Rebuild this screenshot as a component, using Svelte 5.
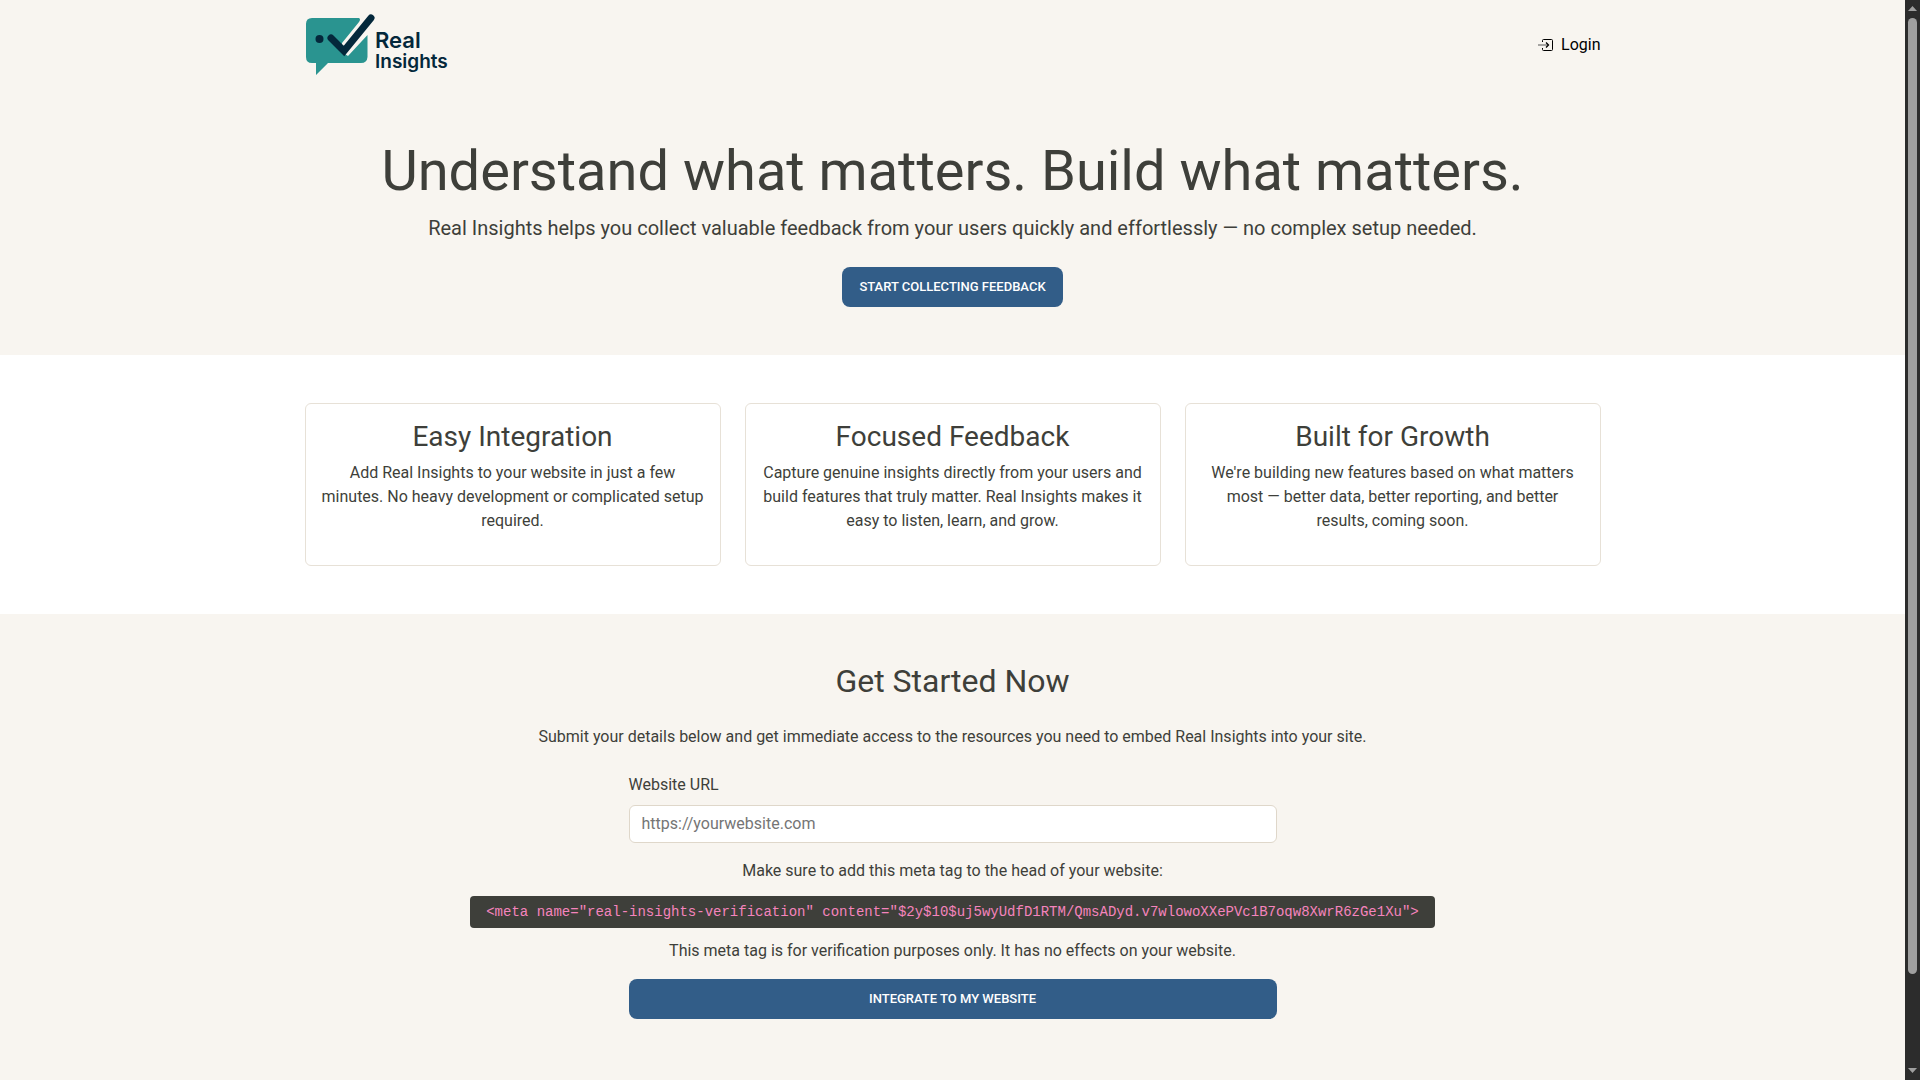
<!--
  Landing page: header, hero, feature cards and the integration form.
-->
<script lang="ts">
  interface Feature {
    title: string;
    text: string;
  }

  const features: Feature[] = [
    {
      title: 'Easy Integration',
      text: 'Add Real Insights to your website in just a few minutes. No heavy development or complicated setup required.',
    },
    {
      title: 'Focused Feedback',
      text: 'Capture genuine insights directly from your users and build features that truly matter. Real Insights makes it easy to listen, learn, and grow.',
    },
    {
      title: 'Built for Growth',
      text: "We're building new features based on what matters most — better data, better reporting, and better results, coming soon.",
    },
  ];

  const token = '$2y$10$uj5wyUdfD1RTM/QmsADyd.v7wlowoXXePVc1B7oqw8XwrR6zGe1Xu';
  const metaTag = `<meta name="real-insights-verification" content="${token}">`;

  let url = $state('');

  function submit(event: SubmitEvent): void {
    event.preventDefault();
  }
</script>

<div class="shell">
  <div class="page">
    <header class="header container">
      <a class="logo" href="/" aria-label="Real Insights">
        <svg width="150" height="66" viewBox="0 0 150 66" aria-hidden="true">
          <path
            d="M7 6H54Q56 7 54 10L37 31V40L43 44L62.500 23V45Q62 51 56 51H23L11 63V51H7Q1 51 1 45V12Q1 6 7 6Z"
            fill="#2a9490"
          />
          <circle cx="14.500" cy="27" r="4" fill="#04283b" />
          <path
            d="M26 26L39 39L66 6"
            fill="none"
            stroke="#04283b"
            stroke-width="7"
            stroke-linecap="round"
            stroke-linejoin="miter"
          />
          <text class="logo__text" x="70" y="36" font-size="22">Real</text>
          <text class="logo__text" x="70" y="56" font-size="19">Insights</text>
        </svg>
      </a>
      <a class="login" href="/login">
        <svg width="16" height="16" viewBox="0 0 16 16" fill="none" aria-hidden="true">
          <path d="M4.500 5V3.500Q4.500 2.500 5.500 2.500H13.500Q14.500 2.500 14.500 3.500V12.500Q14.500 13.500 13.500 13.500H5.500Q4.500 13.500 4.500 12.500V11" stroke="currentColor" />
          <path d="M0 8H10" stroke="#555" />
          <path d="M8 5.500L10.500 8L8 10.500" stroke="currentColor" stroke-width="1.300" />
        </svg>
        <span>Login</span>
      </a>
    </header>

    <section class="hero container">
      <h1>Understand what matters. Build what matters.</h1>
      <p class="lead">
        Real Insights helps you collect valuable feedback from your users quickly and effortlessly — no complex setup needed.
      </p>
      <button type="button" class="btn">Start Collecting Feedback</button>
    </section>

    <section class="features">
      <div class="features__grid container">
        {#each features as feature}
          <article class="card">
            <h3>{feature.title}</h3>
            <p>{feature.text}</p>
          </article>
        {/each}
      </div>
    </section>

    <section class="start container">
      <h2>Get Started Now</h2>
      <p class="start__intro">
        Submit your details below and get immediate access to the resources you need to embed Real Insights into your site.
      </p>
      <form class="form" onsubmit={submit}>
        <div class="form__field">
          <label for="website-url">Website URL</label>
          <input id="website-url" type="url" placeholder="https://yourwebsite.com" bind:value={url} />
        </div>
        <p>Make sure to add this meta tag to the head of your website:</p>
        <p><code>{metaTag}</code></p>
        <p>This meta tag is for verification purposes only. It has no effects on your website.</p>
        <button type="submit" class="btn form__submit">Integrate to my website</button>
      </form>
    </section>
  </div>

  <div class="scrollbar" aria-hidden="true">
    <svg width="9" height="5" viewBox="0 0 9 5"><path d="M0 5L4.500 0L9 5Z" /></svg>
    <div class="scrollbar__track">
      <div class="scrollbar__thumb"></div>
    </div>
    <svg width="9" height="5" viewBox="0 0 9 5"><path d="M0 0L4.500 5L9 0Z" /></svg>
  </div>
</div>

<style>
  :global(body) {
    background: #f8f5f0;
    color: #3e3f3a;
    font-family: Roboto, sans-serif;
    font-size: 16px;
    line-height: 1.5;
  }

  .shell {
    display: flex;
    height: 100vh;
    overflow: hidden;
  }

  .page {
    flex: 1;
    min-width: 0;
  }

  .container {
    box-sizing: border-box;
    width: 100%;
    max-width: 1320px;
    margin: 0 auto;
    padding-right: 12px;
    padding-left: 12px;
  }

  h1,
  h2,
  h3,
  p {
    margin: 0;
    font-weight: 400;
  }

  .header {
    display: flex;
    align-items: center;
    justify-content: space-between;
    padding-top: 12px;
    padding-bottom: 12px;
  }

  .logo {
    display: flex;
  }

  .logo__text {
    fill: #04283b;
    font-family: Inter, sans-serif;
    font-weight: 600;
  }

  .login {
    display: flex;
    align-items: center;
    gap: 7px;
    color: #000;
    text-decoration: none;
  }

  .hero {
    padding-top: 48px;
    padding-bottom: 48px;
    text-align: center;
  }

  h1 {
    margin-bottom: 8px;
    font-size: 56px;
    line-height: 67px;
  }

  .lead {
    margin-bottom: 24px;
    font-size: 20px;
  }

  .btn {
    display: inline-block;
    padding: 9px 17px;
    border: 0;
    border-radius: 8px;
    background: #325d88;
    color: #fff;
    font-family: inherit;
    font-size: 13px;
    font-weight: 500;
    line-height: 22px;
    text-transform: uppercase;
    vertical-align: top;
    cursor: pointer;
  }

  .features {
    padding: 48px 0;
    background: #fff;
  }

  .features__grid {
    display: grid;
    grid-template-columns: repeat(3, 1fr);
    gap: 24px;
  }

  .card {
    padding: 16px 16px 32px;
    border: 1px solid #e7e1d7;
    border-radius: 6px;
    text-align: center;
  }

  h3 {
    margin-bottom: 8px;
    font-size: 28px;
    line-height: 33px;
  }

  .start {
    padding-top: 48px;
    padding-bottom: 48px;
    text-align: center;
  }

  h2 {
    margin-bottom: 24px;
    font-size: 32px;
    line-height: 39px;
  }

  .start__intro {
    margin-bottom: 24px;
  }

  .form {
    display: flex;
    flex-direction: column;
    align-items: center;
    gap: 16px;
  }

  .form__field {
    display: flex;
    flex-direction: column;
    gap: 8px;
    width: 50%;
    text-align: left;
  }

  input {
    box-sizing: border-box;
    width: 100%;
    padding: 6px 12px;
    border: 1px solid #dfd7ca;
    border-radius: 6px;
    background: #fff;
    color: #3e3f3a;
    font: inherit;
  }

  input::placeholder {
    color: #757575;
    opacity: 1;
  }

  code {
    padding: 8px 16px;
    border-radius: 4px;
    background: #3e3f3a;
    color: #f584bd;
    font-family: 'Liberation Mono', monospace;
    font-size: 14px;
  }

  .form__submit {
    width: 50%;
  }

  .scrollbar {
    display: flex;
    flex-direction: column;
    align-items: center;
    gap: 7px;
    box-sizing: border-box;
    width: 15px;
    padding: 6px 0 7px;
    background: #2c2c2c;
  }

  .scrollbar svg {
    flex: none;
    fill: #9f9f9f;
  }

  .scrollbar__track {
    flex: 1;
  }

  .scrollbar__thumb {
    width: 9px;
    height: calc(100% * 11 / 12);
    border-radius: 5px;
    background: #9f9f9f;
  }
</style>
